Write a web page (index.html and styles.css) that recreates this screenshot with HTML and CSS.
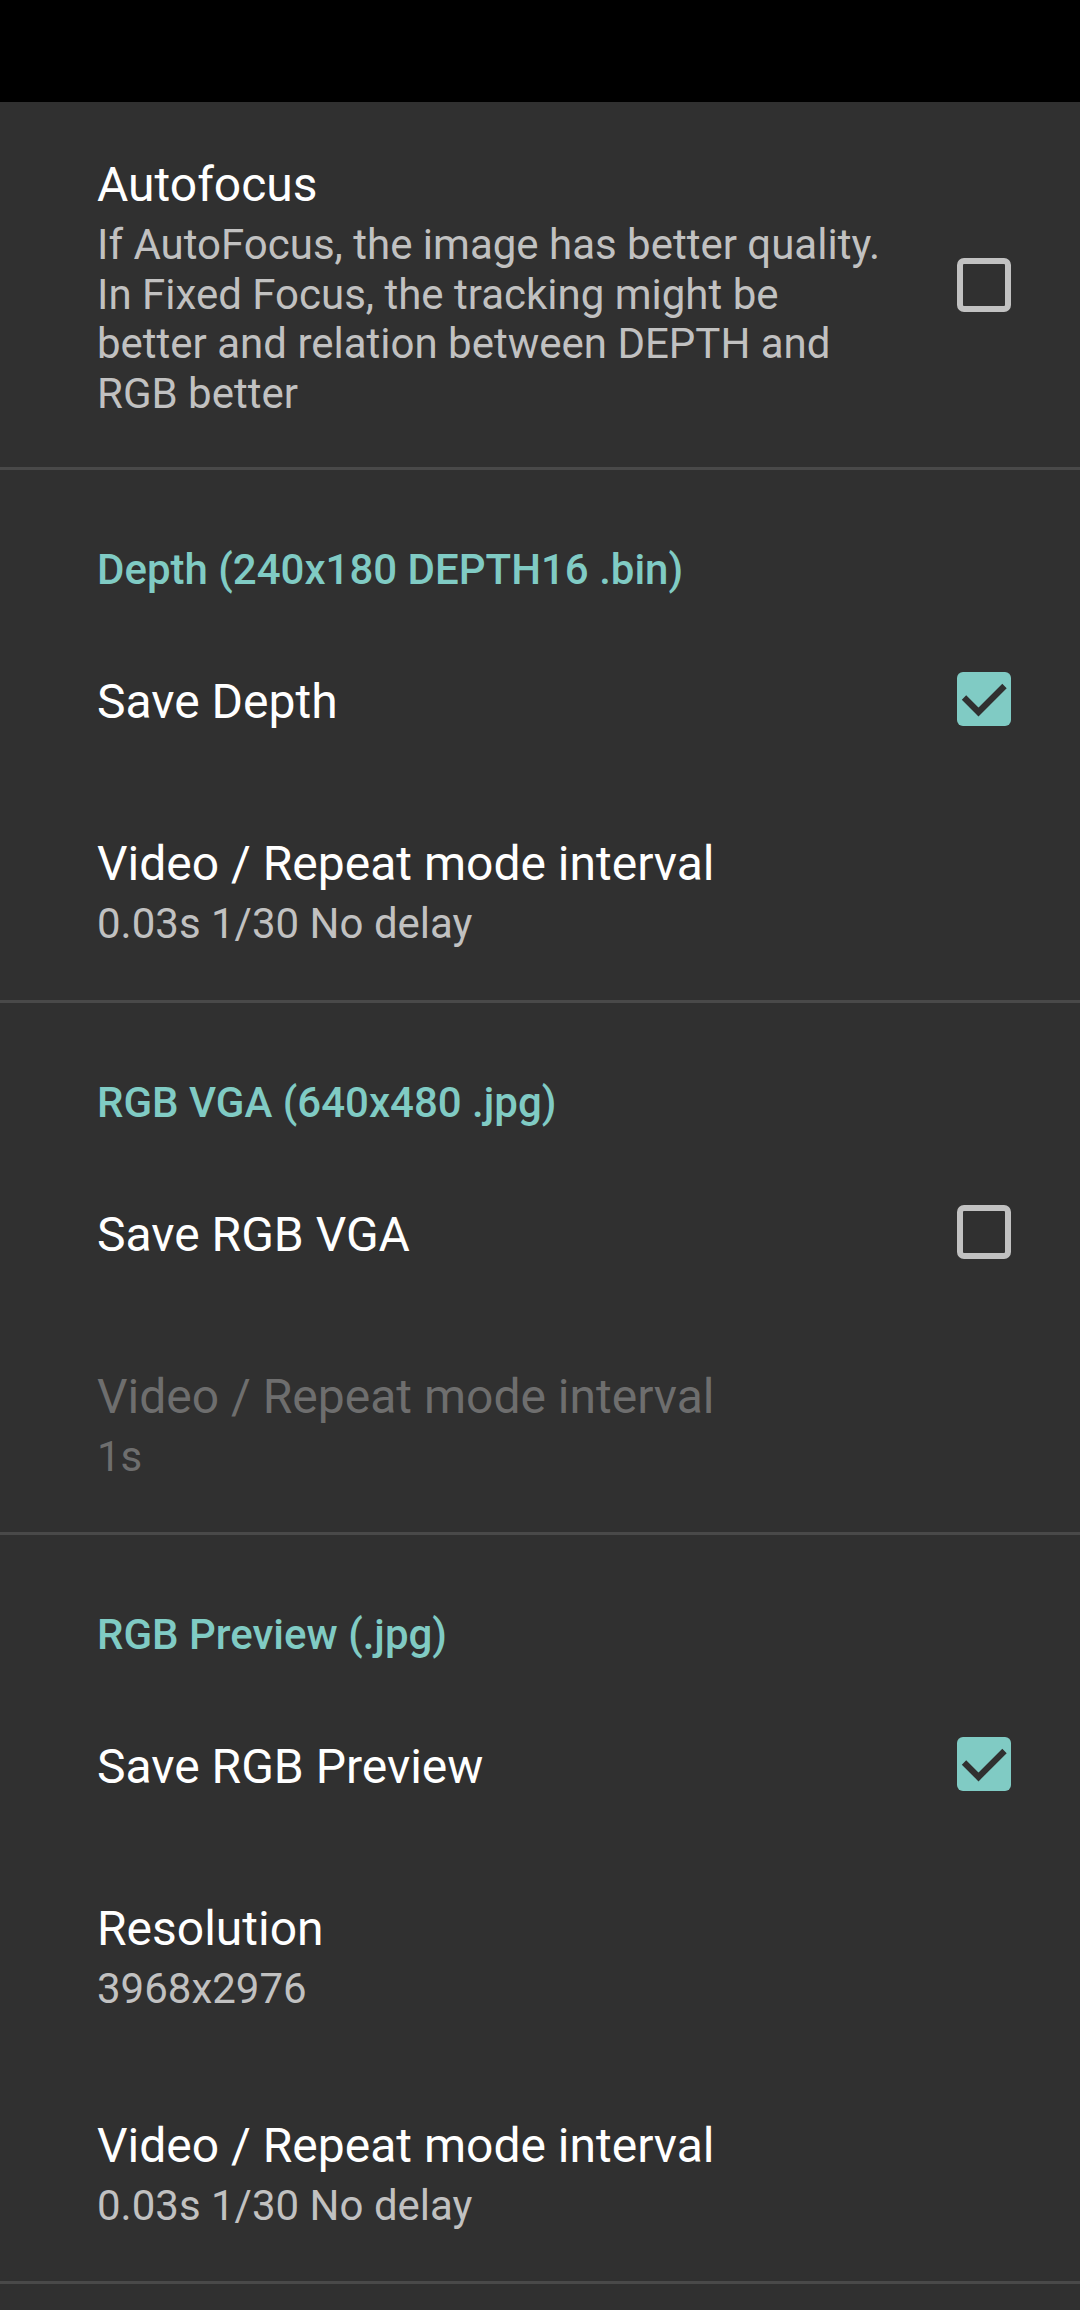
FILE: index.html
```html
<!DOCTYPE html>
<html>
<head>
<meta charset="utf-8">
<link rel="stylesheet" href="styles.css">
</head>
<body>
<div class="statusbar"></div>
<div class="list">
  <div class="pref">
    <div class="text">
      <div class="title">Autofocus</div>
      <div class="summary">If AutoFocus, the image has better quality.<br>In Fixed Focus, the tracking might be<br>better and relation between DEPTH and<br>RGB better</div>
    </div>
    <svg class="checkbox" width="54" height="54" viewBox="0 0 54 54"><rect x="3" y="3" width="48" height="48" rx="4" fill="none" stroke="#c1c1c1" stroke-width="6"/></svg>
  </div>
  <div class="divider"></div>

  <div class="category">Depth (240x180 DEPTH16 .bin)</div>
  <div class="pref">
    <div class="text"><div class="title">Save Depth</div></div>
    <svg class="checkbox" width="54" height="54" viewBox="0 0 54 54"><rect x="0" y="0" width="54" height="54" rx="6" fill="#80cbc4"/><path d="M7 25.5 L21.5 40 L47.5 14" fill="none" stroke="#303030" stroke-width="6.2"/></svg>
  </div>
  <div class="pref pref-two">
    <div class="text">
      <div class="title">Video / Repeat mode interval</div>
      <div class="summary">0.03s 1/30 No delay</div>
    </div>
  </div>
  <div class="divider"></div>

  <div class="category">RGB VGA (640x480 .jpg)</div>
  <div class="pref">
    <div class="text"><div class="title">Save RGB VGA</div></div>
    <svg class="checkbox" width="54" height="54" viewBox="0 0 54 54"><rect x="3" y="3" width="48" height="48" rx="4" fill="none" stroke="#c1c1c1" stroke-width="6"/></svg>
  </div>
  <div class="pref pref-two disabled">
    <div class="text">
      <div class="title">Video / Repeat mode interval</div>
      <div class="summary">1s</div>
    </div>
  </div>
  <div class="divider"></div>

  <div class="category">RGB Preview (.jpg)</div>
  <div class="pref">
    <div class="text"><div class="title">Save RGB Preview</div></div>
    <svg class="checkbox" width="54" height="54" viewBox="0 0 54 54"><rect x="0" y="0" width="54" height="54" rx="6" fill="#80cbc4"/><path d="M7 25.5 L21.5 40 L47.5 14" fill="none" stroke="#303030" stroke-width="6.2"/></svg>
  </div>
  <div class="pref pref-two">
    <div class="text">
      <div class="title">Resolution</div>
      <div class="summary">3968x2976</div>
    </div>
  </div>
  <div class="pref pref-two">
    <div class="text">
      <div class="title">Video / Repeat mode interval</div>
      <div class="summary">0.03s 1/30 No delay</div>
    </div>
  </div>
  <div class="divider"></div>
</div>
</body>
</html>
```

FILE: styles.css
```css
html, body {
  margin: 0;
  padding: 0;
  background: #303030;
}
body {
  font-family: Roboto, "Noto Sans", "Liberation Sans", sans-serif;
  width: 1080px;
  min-height: 2310px;
}
.statusbar {
  height: 102px;
  background: #000000;
}
.list {
  display: flex;
  flex-direction: column;
}
.pref {
  display: flex;
  align-items: center;
  box-sizing: border-box;
  min-height: 168px;
  padding: 55px 69px 49px 97px;
}
.pref-two {
  padding-top: 53px;
  padding-bottom: 51px;
}
.checkbox {
  flex: none;
  display: block;
  margin-top: -6px;
}
.text {
  flex: 1;
  display: flex;
  flex-direction: column;
  gap: 7px;
}
.title {
  font-size: 48px;
  line-height: 56px;
  color: #ffffff;
}
.summary {
  font-size: 42px;
  line-height: 49.5px;
  color: #c1c1c1;
}
.disabled .title,
.disabled .summary {
  color: #6e6e6e;
}
.divider {
  height: 3px;
  background: #494949;
}
.category {
  padding: 75px 97px 21px;
  font-size: 42px;
  line-height: 49px;
  font-weight: 500;
  color: #80cbc4;
}
```
